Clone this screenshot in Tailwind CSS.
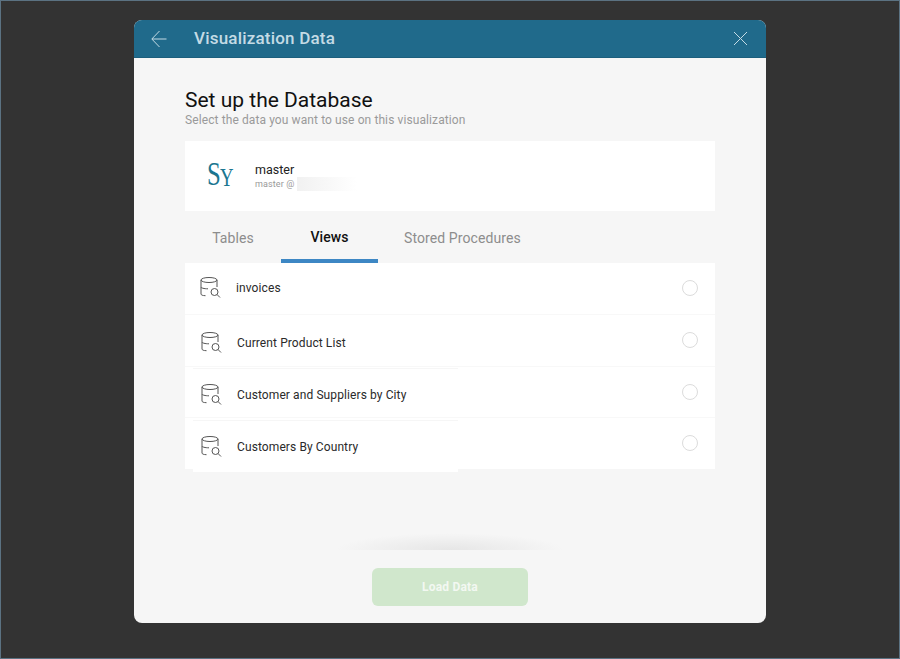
<!DOCTYPE html>
<html lang="en">
<head>
  <meta charset="UTF-8" />
  <title>Visualization Data</title>
  <script src="https://cdn.jsdelivr.net/npm/@tailwindcss/browser@4"></script>
</head>
<body class="bg-[#333333] font-['Roboto',sans-serif]">
  <div class="w-[900px] h-[659px] border border-[#5b7282] pt-[19px] pl-[133px] overflow-hidden">
    <!-- modal -->
    <div class="w-[632px] h-[603px] bg-[#f6f6f6] rounded-lg overflow-hidden flex flex-col">
      <div class="h-[38px] shrink-0 bg-[#206a8b] flex items-center border-b border-[#1c5f7d]">
        <svg class="ml-[17px] w-[16px] h-[18px]" viewBox="0 0 16 18" fill="none" stroke="#c4dbe5" stroke-width="1">
          <path d="M15.500 9H1M8.500 1L.8 9l7.700 8" />
        </svg>
        <span class="ml-[27px] text-[17px] font-medium tracking-[0.2px] text-[#c4dbe5]">Visualization Data</span>
        <svg class="ml-auto mr-[18px] w-[15px] h-[15px]" viewBox="0 0 15 15" fill="none" stroke="#c4dbe5" stroke-width="1">
          <path d="M1 1l13 13M14 1L1 14" />
        </svg>
      </div>

      <div class="flex-1 pl-[51px] pr-[51px] pt-[30px]">
        <h1 class="text-[21px] leading-[25px] text-[#111]">Set up the Database</h1>
        <p class="text-[12px] leading-[15px] tracking-[0.1px] text-[#9a9a9a]">Select the data you want to use on this visualization</p>

        <!-- connection card -->
        <div class="mt-[13px] h-[70px] bg-white flex items-center">
          <div class="ml-[22px] w-[48px] h-[30px] flex items-end font-['Liberation_Serif',serif] leading-none text-[#1b7690]">
            <span class="inline-block origin-left scale-x-75 text-[33px] w-[13px]">S</span>
            <span class="inline-block origin-left scale-x-75 -translate-y-[1px] text-[25px]">Y</span>
          </div>
          <div>
            <div class="text-[12.5px] leading-[15px] text-[#222]">master</div>
            <div class="flex items-center text-[9px] leading-[12px] tracking-[0.1px] text-[#999]">master @<span class="ml-[3px] w-[60px] h-[14px] bg-gradient-to-r from-[#f1f1f1] to-white"></span></div>
          </div>
        </div>

        <!-- tabs -->
        <div class="h-[52px] flex text-[14px] tracking-[0.1px]">
          <div class="w-[96px] flex items-center justify-center pt-[2px] text-[#8d8d8d]">Tables</div>
          <div class="w-[97px] flex items-center justify-center pt-[5px] font-medium text-[#111] border-b-4 border-[#3d87c4]">Views</div>
          <div class="ml-[26px] flex items-center pt-[2px] text-[#8d8d8d]">Stored Procedures</div>
        </div>

        <!-- list -->
        <div class="text-[12px] tracking-[0.1px] text-[#2a2a2a]">
          <div class="h-[52px] bg-white border-b border-[#f8f8f8] flex items-center pl-[15px] pr-[17px]">
            <svg class="w-[21px] h-[22px] -mt-[1px]" viewBox="0 0 21 22" fill="none" stroke="#555" stroke-width="1"><ellipse cx="9" cy="3" rx="8" ry="2.500"/><path d="M1 3v14c0 1 1.500 1.600 4.500 1.700M17 3v7M1 10c0 1 3 1.800 7 1.800"/><circle cx="14.500" cy="15" r="3.500"/><path d="M17 17.500l3 3"/></svg>
            <span class="ml-[15px] -mt-[1px]">invoices</span>
            <span class="ml-auto -mt-[2px] w-[16px] h-[16px] rounded-full border border-[#dcdcdc]"></span>
          </div>
          <div class="h-[52px] bg-white border-b border-[#f8f8f8] flex items-center pr-[17px]">
            <div class="h-[52px] pl-[16px] flex items-center pt-[5px]">
              <svg class="w-[21px] h-[22px]" viewBox="0 0 21 22" fill="none" stroke="#555" stroke-width="1"><ellipse cx="9" cy="3" rx="8" ry="2.500"/><path d="M1 3v14c0 1 1.500 1.600 4.500 1.700M17 3v7M1 10c0 1 3 1.800 7 1.800"/><circle cx="14.500" cy="15" r="3.500"/><path d="M17 17.500l3 3"/></svg>
              <span class="ml-[15px]">Current Product List</span>
            </div>
            <span class="ml-auto -mt-[2px] w-[16px] h-[16px] rounded-full border border-[#dcdcdc]"></span>
          </div>
          <div class="h-[51px] bg-white border-b border-[#f8f8f8] flex items-center pr-[17px]">
            <div class="h-[52px] w-[273px] pl-[16px] flex items-center pt-[4px] relative self-start">
              <span class="absolute left-[8px] right-0 top-[1px] border-t border-[#f6f6f6]"></span>
              <svg class="w-[21px] h-[22px]" viewBox="0 0 21 22" fill="none" stroke="#555" stroke-width="1"><ellipse cx="9" cy="3" rx="8" ry="2.500"/><path d="M1 3v14c0 1 1.500 1.600 4.500 1.700M17 3v7M1 10c0 1 3 1.800 7 1.800"/><circle cx="14.500" cy="15" r="3.500"/><path d="M17 17.500l3 3"/></svg>
              <span class="ml-[15px]">Customer and Suppliers by City</span>
            </div>
            <span class="ml-auto -mt-[1px] w-[16px] h-[16px] rounded-full border border-[#dcdcdc]"></span>
          </div>
          <div class="h-[51px] bg-white flex items-center pr-[17px]">
            <div class="h-[54px] w-[273px] pl-[16px] flex items-center pt-[4px] relative self-start">
              <span class="absolute left-[8px] right-0 top-[2px] border-t border-[#f6f6f6]"></span>
              <span class="absolute left-[8px] right-0 top-[51px] h-[3px] bg-white"></span>
              <svg class="w-[21px] h-[22px]" viewBox="0 0 21 22" fill="none" stroke="#555" stroke-width="1"><ellipse cx="9" cy="3" rx="8" ry="2.500"/><path d="M1 3v14c0 1 1.500 1.600 4.500 1.700M17 3v7M1 10c0 1 3 1.800 7 1.800"/><circle cx="14.500" cy="15" r="3.500"/><path d="M17 17.500l3 3"/></svg>
              <span class="ml-[15px]">Customers By Country</span>
            </div>
            <span class="ml-auto -mt-[1px] w-[16px] h-[16px] rounded-full border border-[#dcdcdc]"></span>
          </div>
        </div>

        <!-- fade above footer -->
        <div class="mt-[64px] mx-[150px] h-[17px] bg-[radial-gradient(ellipse_at_bottom,#e6e6e6,transparent_70%)]"></div>

        <div class="mt-[18px] flex justify-center">
          <button class="w-[156px] h-[38px] rounded-md bg-[#d0e7cc] text-[12px] font-bold tracking-[0.2px] text-[#f3f8f2]">Load Data</button>
        </div>
      </div>
    </div>
  </div>
</body>
</html>
